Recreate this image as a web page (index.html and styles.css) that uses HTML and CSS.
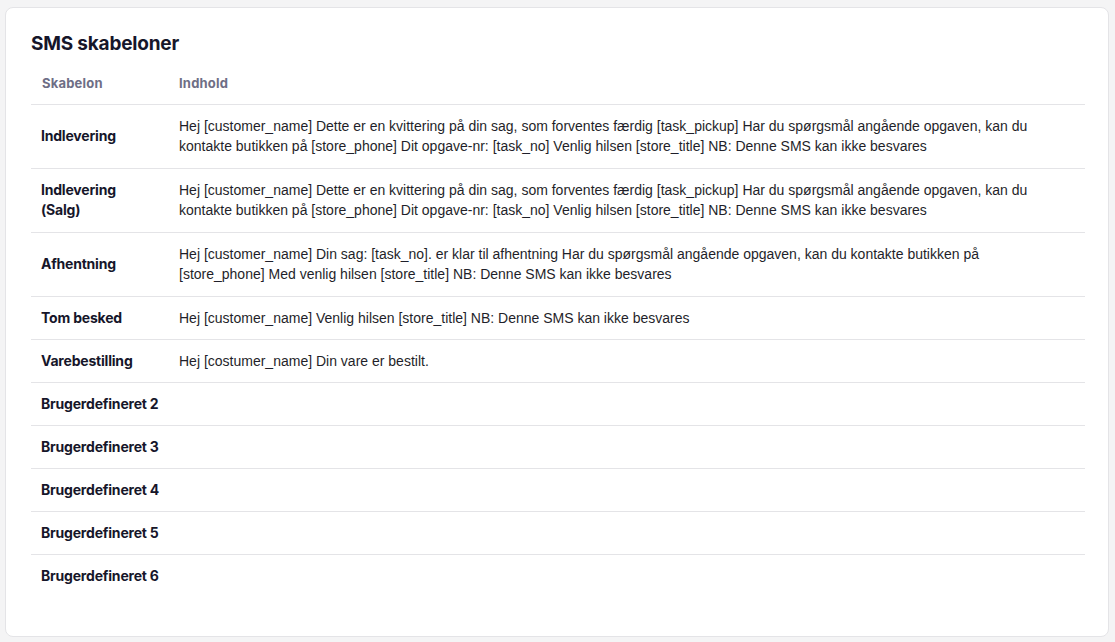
FILE: index.html
```html
<!DOCTYPE html>
<html lang="da">
<head>
<meta charset="utf-8">
<link rel="stylesheet" href="styles.css">
</head>
<body>
<div class="page">
  <section class="card">
    <h2 class="title">SMS skabeloner</h2>
    <table class="tpl">
      <thead>
        <tr><th class="c1">Skabelon</th><th>Indhold</th></tr>
      </thead>
      <tbody>
        <tr class="tall"><td class="name">Indlevering</td><td class="body">Hej [customer_name] Dette er en kvittering på din sag, som forventes færdig [task_pickup] Har du spørgsmål angående opgaven, kan du kontakte butikken på [store_phone] Dit opgave-nr: [task_no] Venlig hilsen [store_title] NB: Denne SMS kan ikke besvares</td></tr>
        <tr class="tall"><td class="name">Indlevering<br>(Salg)</td><td class="body">Hej [customer_name] Dette er en kvittering på din sag, som forventes færdig [task_pickup] Har du spørgsmål angående opgaven, kan du kontakte butikken på [store_phone] Dit opgave-nr: [task_no] Venlig hilsen [store_title] NB: Denne SMS kan ikke besvares</td></tr>
        <tr class="tall"><td class="name">Afhentning</td><td class="body">Hej [customer_name] Din sag: [task_no]. er klar til afhentning Har du spørgsmål angående opgaven, kan du kontakte butikken på [store_phone] Med venlig hilsen [store_title] NB: Denne SMS kan ikke besvares</td></tr>
        <tr><td class="name">Tom besked</td><td class="body">Hej [customer_name] Venlig hilsen [store_title] NB: Denne SMS kan ikke besvares</td></tr>
        <tr><td class="name">Varebestilling</td><td class="body">Hej [costumer_name] Din vare er bestilt.</td></tr>
        <tr><td class="name">Brugerdefineret 2</td><td class="body"></td></tr>
        <tr><td class="name">Brugerdefineret 3</td><td class="body"></td></tr>
        <tr><td class="name">Brugerdefineret 4</td><td class="body"></td></tr>
        <tr><td class="name">Brugerdefineret 5</td><td class="body"></td></tr>
        <tr><td class="name">Brugerdefineret 6</td><td class="body"></td></tr>
      </tbody>
    </table>
  </section>
</div>
</body>
</html>
```

FILE: styles.css
```css
html, body {
  margin: 0;
  padding: 0;
  background: #f4f4f5;
}

.page {
  padding: 7px 6px 5px 5px;
  height: 642px;
  box-sizing: border-box;
}

.card {
  background: #ffffff;
  border: 1px solid #e4e4e7;
  border-radius: 8px;
  padding: 22px 23px 38px 25px;
  height: 100%;
  box-sizing: border-box;
}

.title {
  margin: 0 0 4px 0;
  font-family: Inter, "Noto Sans", sans-serif;
  font-weight: 700;
  font-size: 19px;
  line-height: 28px;
  letter-spacing: -0.2px;
  color: #16162a;
}

.tpl {
  width: 100%;
  border-collapse: collapse;
  table-layout: fixed;
}

.tpl th {
  text-align: left;
  font-family: Inter, "Noto Sans", sans-serif;
  font-weight: 700;
  font-size: 13px;
  line-height: 20px;
  letter-spacing: 0.2px;
  color: #6e6e85;
  padding: 11px 10px;
  border-bottom: 1px solid #e4e4e7;
}

.tpl th.c1 {
  width: 117px;
  padding-left: 11px;
}

.tpl td {
  padding: 11px 10px;
  line-height: 20px;
  font-size: 14px;
  vertical-align: middle;
  border-bottom: 1px solid #e4e4e7;
}

.tpl tr.tall td {
  padding-bottom: 12px;
}

.tpl tbody tr:last-child td {
  border-bottom: none;
}

.tpl td.name {
  font-family: Inter, "Noto Sans", sans-serif;
  font-weight: 700;
  color: #16162a;
  line-height: 20px;
  white-space: nowrap;
  letter-spacing: -0.2px;
}

.tpl td.body {
  font-family: "Liberation Sans", Arial, sans-serif;
  color: #1f1f2a;
  padding-right: 26px;
}
```
